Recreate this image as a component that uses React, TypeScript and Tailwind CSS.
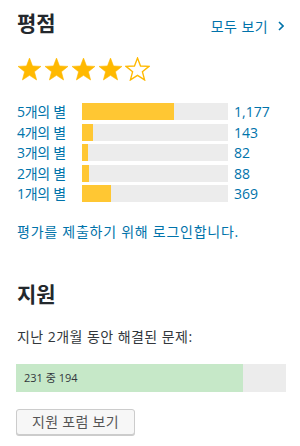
import React from "react";

const font = { fontFamily: '"Open Sans", "Noto Sans CJK KR", sans-serif' };

function Star({ filled }: { filled: boolean }) {
  return (
    <svg width="25" height="24" viewBox="0 0 24 23" className="block">
      <polygon
        points="12,1 14.9,8.6 23,9 16.7,14.1 18.8,22 12,17.6 5.2,22 7.3,14.1 1,9 9.1,8.6"
        fill={filled ? "#ffb900" : "#fff"}
        stroke="#ffb900"
        strokeWidth={filled ? 0.6 : 1.3}
        strokeLinejoin="miter"
      />
    </svg>
  );
}

const rows = [
  { label: "5개의 별", count: 1177, text: "1,177" },
  { label: "4개의 별", count: 143, text: "143" },
  { label: "3개의 별", count: 82, text: "82" },
  { label: "2개의 별", count: 88, text: "88" },
  { label: "1개의 별", count: 369, text: "369" },
];
const total = rows.reduce((s, r) => s + r.count, 0);

export default function App() {
  return (
    <div className="w-[300px] h-[446px] bg-white pl-4 pr-[14px] pt-[8px] overflow-hidden" style={font}>
      <div className="flex items-center justify-between">
        <h2 className="text-[21px] font-bold leading-[30px] text-[#23282d] pl-px">평점</h2>
        <a className="text-[14px] text-[#0073aa] flex items-center gap-[10px] mt-[6px] pr-[2px]">
          <span className="tracking-[0.4px]">모두 보기</span>
          <svg width="6" height="10" viewBox="0 0 6 10"><path d="M1 1 L5 5 L1 9" fill="none" stroke="#0073aa" strokeWidth="1.6" /></svg>
        </a>
      </div>
      <div className="flex gap-[2px] mt-[19px] pl-px">
        {[0, 1, 2, 3, 4].map((i) => (
          <Star key={i} filled={i < 4} />
        ))}
      </div>
      <div className="mt-[22px] flex flex-col gap-[3.5px]">
        {rows.map((r) => (
          <div key={r.label} className="flex items-center h-[17px]">
            <span className="w-[66px] text-[14px] text-[#0073aa] leading-[17px] pl-px tracking-[-0.3px]">{r.label}</span>
            <div className="w-[146px] h-[17px] bg-[#ececec]">
              <div className="h-full bg-[#ffc733]" style={{ width: `${(r.count / total) * 100}%` }} />
            </div>
            <span className="ml-[6px] text-[14px] text-[#0073aa] leading-[17px]">{r.text}</span>
          </div>
        ))}
      </div>
      <p className="mt-[21px] text-[14px] text-[#0073aa] leading-[18px] pl-px tracking-[0.75px]">평가를 제출하기 위해 로그인합니다.</p>

      <h2 className="mt-[38px] text-[21px] font-bold leading-[30px] text-[#23282d] pl-px">지원</h2>
      <p className="mt-[19px] text-[14px] text-[#32373c] leading-[18px] pl-px tracking-[0.45px]">지난 2개월 동안 해결된 문제:</p>
      <div className="mt-[18px] h-[28px] w-full bg-[#ececec] relative">
        <div className="h-full bg-[#c6e8c8]" style={{ width: `${(194 / 231) * 100}%` }} />
        <span className="absolute left-[8px] top-0 leading-[28px] text-[11px] text-[#32373c]">231 중 194</span>
      </div>
      <button className="mt-[17px] h-[26px] px-[15px] text-[14px] text-[#555] bg-[#f7f7f7] border border-[#ccc] rounded-[3px] shadow-[0_1px_0_#ccc] leading-[24px] tracking-[0.3px]">
        지원 포럼 보기
      </button>
    </div>
  );
}
